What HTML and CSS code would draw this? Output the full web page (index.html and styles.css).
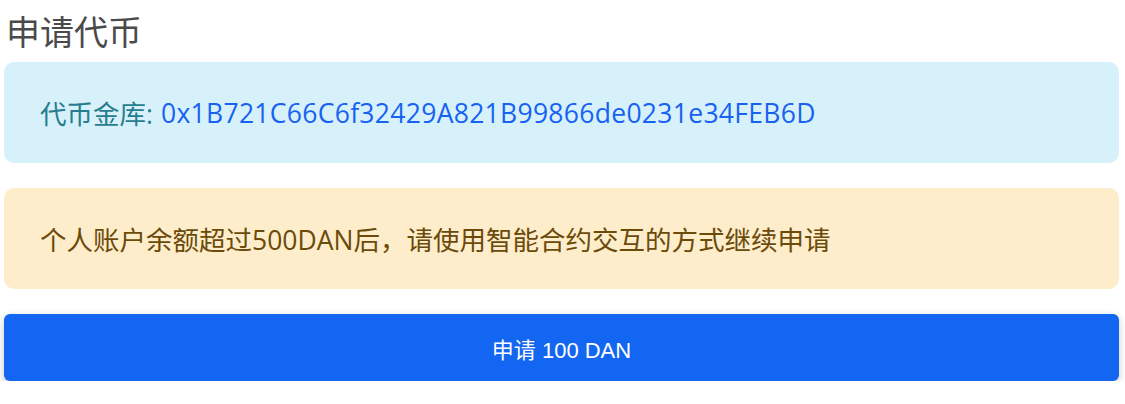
FILE: index.html
```html
<!DOCTYPE html>
<html lang="zh">
<head>
<meta charset="utf-8">
<link rel="stylesheet" href="styles.css">
</head>
<body>
<div class="page">
  <h2 class="title">申请代币</h2>
  <div class="alert alert-info">代币金库: <span class="addr">0x1B721C66C6f32429A821B99866de0231e34FEB6D</span></div>
  <div class="alert alert-warning">个人账户余额超过500DAN后，请使用智能合约交互的方式继续申请</div>
  <button class="btn">申请 100 DAN</button>
</div>
</body>
</html>
```

FILE: styles.css
```css
html, body {
  margin: 0;
  padding: 0;
  background: #ffffff;
}
body {
  font-family: "Open Sans", "Noto Sans CJK SC", sans-serif;
}
.page {
  padding: 0 6px 0 4px;
  display: flex;
  flex-direction: column;
}
.title {
  margin: 6px 0 0 2px;
  font-family: "Noto Sans CJK SC", sans-serif;
  font-weight: 400;
  font-size: 34px;
  line-height: 50px;
  color: #4a4a4a;
}
.alert {
  margin-top: 6px;
  border-radius: 10px;
  padding: 0 36px;
  height: 101px;
  display: flex;
  align-items: center;
  font-size: 26.5px;
  font-family: "Open Sans", "Noto Sans CJK SC", sans-serif;
}
.alert-info {
  background: #d7f1fa;
  color: #277d8e;
}
.addr {
  color: #1762f2;
  margin-left: 8px;
  letter-spacing: 0.3px;
}
.alert-warning {
  margin-top: 25px;
  background: #feedcb;
  color: #6b4a0a;
}
.btn {
  margin-top: 25px;
  height: 67px;
  border: none;
  border-radius: 6px;
  background: #1366f2;
  color: #ffffff;
  font-size: 22px;
  font-family: "Liberation Sans", "Noto Sans CJK SC", sans-serif;
  box-shadow: 0 3px 8px rgba(0, 0, 0, 0.22);
}
```
